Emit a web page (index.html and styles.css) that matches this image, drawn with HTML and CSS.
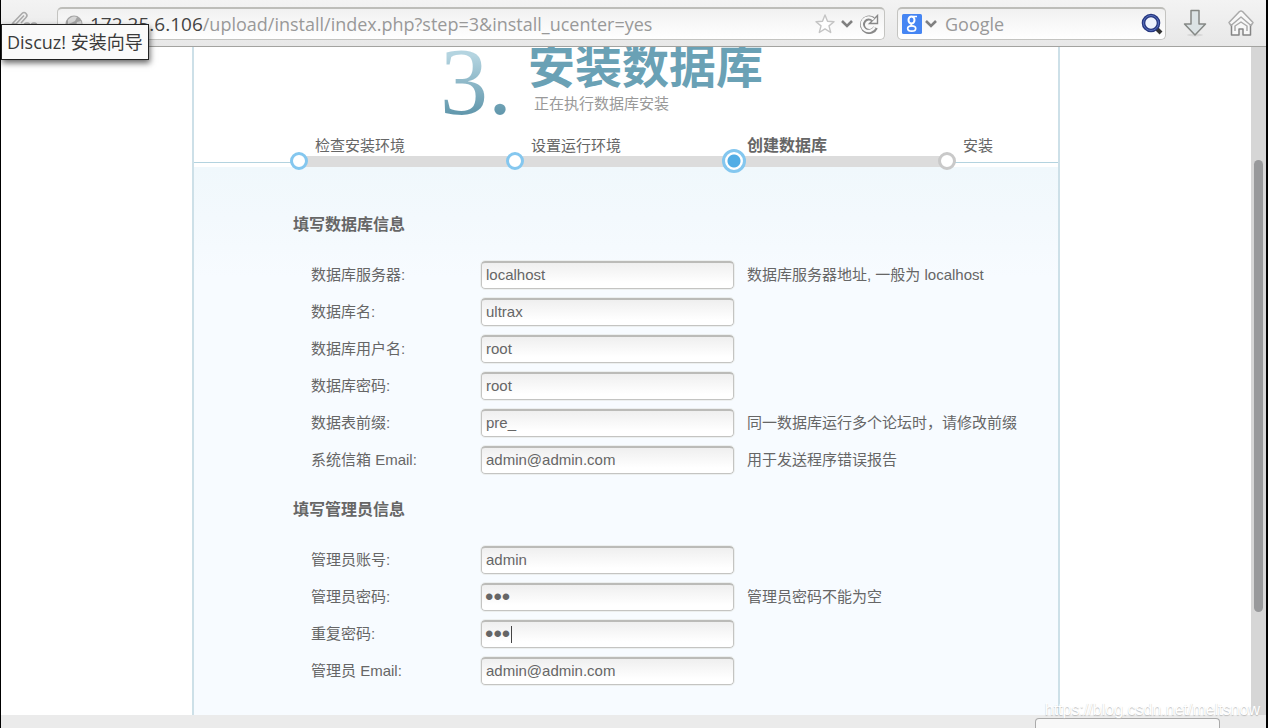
FILE: index.html
```
<!DOCTYPE html>
<html lang="zh-CN">
<head>
<meta charset="utf-8">
<title>Discuz! 安装向导</title>
<link rel="stylesheet" href="styles.css">
</head>
<body>
<header class="toolbar">
  <button class="tool back" aria-label="后退">
    <svg width="30" height="28" viewBox="0 0 30 28" fill="none" stroke="#aaa" stroke-width="1.6" stroke-linejoin="round"><path d="M2 15 12 4.500q2-2 4 0t0 4L11 14M2 15h4l8-8.500M14 17a3 3 0 1 1 6 0M21 17a3 3 0 1 1 6 0"/></svg>
  </button>
  <div class="field address">
    <svg width="18" height="18" viewBox="0 0 18 18"><circle cx="9" cy="9" r="8.5" fill="#a4a4a4"/><path d="M3 5q4-5 9-3l-2 4-4 2-3 1zM12 7l4-1 1 4-3 4-3-3z" fill="#d6d6d6"/></svg>
    <div class="url"><b>172.25.6.106</b>/upload/install/index.php?step=3&amp;install_ucenter=yes</div>
    <button class="tool" aria-label="收藏"><svg width="20" height="20" viewBox="0 0 20 20" fill="#fff" stroke="#c4c4c4" stroke-width="1.4" stroke-linejoin="round"><path d="m10 1 2.500 6.200 6.500.5-5 4.200 1.700 6.600L10 14.900l-5.700 3.600L6 11.900 1 7.700l6.500-.5z"/></svg></button>
    <button class="tool" aria-label="历史"><svg width="12" height="8" viewBox="0 0 12 8" fill="none" stroke="#808080" stroke-width="2.600"><path d="m1 1 5 5 5-5"/></svg></button>
    <button class="tool reload" aria-label="刷新"><svg width="20" height="20" viewBox="0 0 20 20" fill="none"><path d="M16.500 13.500A6.800 6.800 0 1 1 14 5" stroke="#888" stroke-width="5"/><path d="M18.500 1.500v8H10.500l3-3z" fill="#f8f8f8" stroke="#888" stroke-width="1.400"/><path d="M15.700 13.200A6.800 6.800 0 1 1 14.500 5.500" stroke="#f8f8f8" stroke-width="2.400"/></svg></button>
  </div>
  <div class="field search">
    <svg width="20" height="20" viewBox="0 0 20 20"><rect width="20" height="20" rx="1.500" fill="#4585f3"/><g fill="none" stroke="#fff"><ellipse cx="9.500" cy="6" rx="3" ry="3.500" stroke-width="2"/><path d="M11 2.500h4M10 9.500q-2 1.500 0 2.500" stroke-width="1.500"/><ellipse cx="9.700" cy="14.500" rx="4" ry="2.700" stroke-width="1.700"/></g></svg>
    <button class="tool" aria-label="搜索引擎"><svg width="12" height="8" viewBox="0 0 12 8" fill="none" stroke="#808080" stroke-width="2.600"><path d="m1 1 5 5 5-5"/></svg></button>
    <input class="query" type="text" placeholder="Google" aria-label="搜索">
    <button class="tool" aria-label="搜索"><svg width="22" height="22" viewBox="0 0 22 22" fill="none"><path d="m15 15 5 5" stroke="#333" stroke-width="4"/><circle cx="10" cy="10" r="7.500" fill="#eef3fc" stroke="#273880" stroke-width="3.600"/><circle cx="10" cy="10" r="7.500" stroke="#5770bd" stroke-width="1"/></svg></button>
  </div>
  <button class="tool download" aria-label="下载"><svg width="24" height="28" viewBox="0 0 24 28"><ellipse cx="12" cy="26" rx="8" ry="1.500" fill="#d8d8d8"/><path d="M8 1.500h8V15h6.500L12 26 1.500 15H8z" fill="#dce3e5" stroke="#858885" stroke-width="1.500" stroke-linejoin="round"/></svg></button>
  <button class="tool home" aria-label="主页"><svg width="26" height="28" viewBox="0 0 26 28" fill="#f8f8f8" stroke="#858585" stroke-width="1.500" stroke-linejoin="round"><path d="M3.500 14v12H11v-6h4v6h7.500V14L13 7z"/><path d="M7 22v-5l6-4 6 4v5" fill="none" stroke="#aaa"/><path d="m1 13.500 10.500-11q1.500-1 3 0l10.500 11-2 3L13 8 3 16.500z" stroke="#aaa"/></svg></button>
  <div class="tooltip" role="tooltip">Discuz! 安装向导</div>
</header>

<div class="viewport">
  <main class="page">
    <div class="banner">
      <div class="number">3.</div>
      <div>
        <h1>安装数据库</h1>
        <p>正在执行数据库安装</p>
      </div>
    </div>
    <ol class="steps">
      <li class="done">检查安装环境</li>
      <li class="done">设置运行环境</li>
      <li class="current">创建数据库</li>
      <li>安装</li>
    </ol>
    <form class="setup">
      <h2>填写数据库信息</h2>
      <div class="row"><label for="dbhost">数据库服务器:</label><input id="dbhost" type="text" value="localhost"><span>数据库服务器地址, 一般为 localhost</span></div>
      <div class="row"><label for="dbname">数据库名:</label><input id="dbname" type="text" value="ultrax"></div>
      <div class="row"><label for="dbuser">数据库用户名:</label><input id="dbuser" type="text" value="root"></div>
      <div class="row"><label for="dbpw">数据库密码:</label><input id="dbpw" type="text" value="root"></div>
      <div class="row"><label for="prefix">数据表前缀:</label><input id="prefix" type="text" value="pre_"><span>同一数据库运行多个论坛时，请修改前缀</span></div>
      <div class="row"><label for="email">系统信箱 Email:</label><input id="email" type="text" value="admin@admin.com"><span>用于发送程序错误报告</span></div>
      <h2>填写管理员信息</h2>
      <div class="row"><label for="admin">管理员账号:</label><input id="admin" type="text" value="admin"></div>
      <div class="row"><label for="pw">管理员密码:</label><input id="pw" type="password" value="123"><span>管理员密码不能为空</span></div>
      <div class="row"><label for="pw2">重复密码:</label><div class="focused"><input id="pw2" type="password" value="123"></div></div>
      <div class="row"><label for="adminmail">管理员 Email:</label><input id="adminmail" type="text" value="admin@admin.com"></div>
    </form>
  </main>
  <div class="scrollbar"><div class="thumb"></div></div>
</div>
<footer class="taskbar"><div class="task"></div></footer>
<div class="watermark">https://blog.csdn.net/meltsnow</div>
</body>
</html>
```
FILE: styles.css
```
*, ::before, ::after { box-sizing: border-box; }
body {
  margin: 0;
  height: 100vh;
  display: flex;
  flex-direction: column;
  position: relative;
  overflow: hidden;
  border-left: 1px solid #000;
  border-right: 2px solid #000;
  background: #fff;
  color: #666;
  font: 15px/20px "Liberation Sans", "Noto Sans CJK SC", sans-serif;
}
h1, h2, p, ol { margin: 0; padding: 0; }
.toolbar {
  flex: none;
  height: 47px;
  display: flex;
  align-items: center;
  padding: 0 9px;
  position: relative;
  z-index: 1;
  background: linear-gradient(#f3f3f3, #e8e8e8);
  border-bottom: 1px solid #a3a3a0;
  font: 18px/24px "Open Sans", "Noto Sans CJK SC", sans-serif;
}
.tool { display: flex; padding: 0; border: 0; background: none; }
.back { width: 47px; }
.field {
  height: 33px;
  display: flex;
  align-items: center;
  border: 1px solid #c4c4c1;
  border-top: 2px solid #bdbdb9;
  border-radius: 5px;
  background: linear-gradient(#f1f1f1, #fff);
}
.address { flex: 1; min-width: 0; padding: 0 5px 0 7px; gap: 6px; }
.url { flex: 1; min-width: 0; overflow: hidden; white-space: nowrap; padding-left: 1px; color: #999; }
.url b { font-size: 19px; font-weight: 400; color: #444; }
.search { width: 269px; margin: 0 17px 0 12px; padding: 0 2px 0 4px; gap: 3px; }
.query {
  flex: 1;
  min-width: 0;
  border: 0;
  padding: 0 5px;
  background: none;
  font: inherit;
}
.query::placeholder { color: #999; }
.download { margin-right: 21px; }
.home { margin-right: 3px; }
.tooltip {
  position: absolute;
  left: 0;
  top: 24px;
  padding: 5px;
  border: 1px solid #222;
  background: #fafafa;
  color: #3a3a3a;
  white-space: nowrap;
  box-shadow: 1px 3px 6px rgba(0, 0, 0, .6);
}
.viewport { flex: 1; min-height: 0; display: flex; overflow: hidden; }
.page {
  flex: 1;
  max-width: 868px;
  margin: 0 auto;
  border: solid #cde0e8;
  border-width: 0 2px;
}
.banner {
  height: 85px;
  display: flex;
  gap: 16px;
  padding-left: 246px;
}
.number {
  width: 72px;
  font: 96px/70px "Liberation Serif", serif;
  background: linear-gradient(#b4d4e0 10%, #4e89a0 95%);
  background-clip: text;
  color: transparent;
}
h1 {
  margin-top: -4px;
  color: #6aa1b5;
  font-size: 47px;
  line-height: 48px;
}
.banner p { padding: 3px 0 0 6px; color: #999; }
.steps {
  display: flex;
  padding: 4px 0 0 105px;
  list-style: none;
  background: linear-gradient(#b3d3df, #b3d3df) 0 30px / 100% 1px no-repeat;
}
.steps li {
  flex: none;
  position: relative;
  width: 216px;
  padding: 0 0 0 16px;
  border-bottom: 11px solid #dcdcdc;
}
.steps li:last-child { width: auto; border-color: transparent; }
.steps li::after {
  content: "";
  position: absolute;
  left: -9px;
  bottom: -14px;
  width: 18px;
  height: 18px;
  border: 3px solid #c9c9c9;
  border-radius: 50%;
  background: #fff;
}
.steps .done::after { border-color: #84c7ef; }
.steps .current { font-size: 16px; font-weight: 700; }
.steps .current::after {
  bottom: -17px;
  width: 24px;
  height: 24px;
  border-color: #84c7ef;
  background: radial-gradient(circle, #52ade5 6px, #fff 7px);
}
.setup {
  min-height: 548px;
  padding: 26px 0 0 99px;
  background: linear-gradient(#f0f8fc, #f3f9fd 50px, #f7fbff 110px);
}
h2 { font-size: 16px; line-height: 63px; }
.row {
  height: 37px;
  display: grid;
  grid-template-columns: 170px 253px 1fr;
  align-items: center;
  padding-left: 18px;
}
.row span { padding-left: 13px; }
.row input {
  width: 100%;
  height: 28px;
  padding: 0 4px 2px;
  border: 1px solid #c4c4c2;
  border-top: 2px solid #bbbbb8;
  border-radius: 4px;
  outline: 1px solid #ecefef;
  background: linear-gradient(#efefef, #fff 80%);
  color: #666;
  font: inherit;
}
.row input[type="password"] {
  padding: 0 3px;
  font: 24px/24px "Liberation Sans", sans-serif;
}
.focused { position: relative; }
.focused::after {
  content: "";
  position: absolute;
  left: 30px;
  top: 6px;
  width: 1px;
  height: 17px;
  background: #444;
}
.scrollbar { width: 15px; padding: 113px 3px 0 3px; background: #d6d6d6; }
.thumb { height: 452px; border-radius: 5px; background: #98999b; }
.taskbar {
  flex: none;
  height: 13px;
  display: flex;
  justify-content: flex-end;
  padding: 3px 46px 0 0;
  background: #ebebeb;
}
.task {
  width: 185px;
  border: 1px solid #aaa;
  border-bottom: 0;
  border-radius: 4px 4px 0 0;
  background: #f8f8f8;
}
.watermark {
  position: absolute;
  right: 6px;
  bottom: 8px;
  color: #fff;
  font-size: 16px;
  text-shadow: 0 1px 1px #bbb;
}
```
